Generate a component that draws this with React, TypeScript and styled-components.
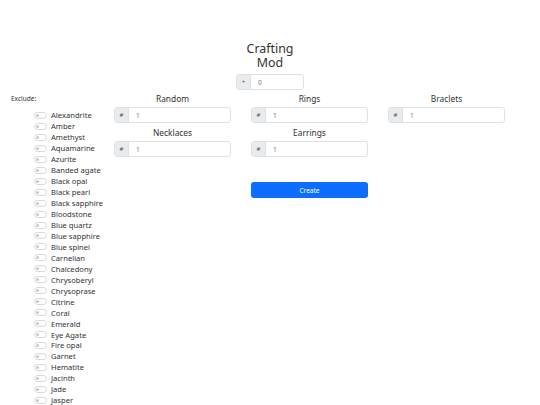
import styled, { createGlobalStyle } from "styled-components"

const GlobalStyle = createGlobalStyle`
  body {
    margin: 0;
    font-family: "Noto Sans", "Open Sans", sans-serif;
    color: #212529;
    background: #fff;
  }
  * { box-sizing: border-box; }
`

const gems = [
  "Alexandrite", "Amber", "Amethyst", "Aquamarine", "Azurite", "Banded agate",
  "Black opal", "Black pearl", "Black sapphire", "Bloodstone", "Blue quartz",
  "Blue sapphire", "Blue spinel", "Carnelian", "Chalcedony", "Chrysoberyl",
  "Chrysoprase", "Citrine", "Coral", "Emerald", "Eye Agate", "Fire opal",
  "Garnet", "Hematite", "Jacinth", "Jade", "Jasper",
]

const Page = styled.div`
  width: 540px;
  height: 405px;
  overflow: hidden;
`

const Header = styled.header`
  padding-top: 42px;
  display: flex;
  flex-direction: column;
  align-items: center;
`

const Title = styled.h1`
  margin: 0;
  width: 60px;
  text-align: center;
  font-size: 12.4px;
  font-weight: 400;
  line-height: 14px;
  color: #333;
`

const Main = styled.div`
  display: grid;
  grid-template-columns: 104px 137px 137px 137px;
  margin-top: -1px;
`

const Sidebar = styled.aside`
  grid-row: 1 / span 4;
  padding-left: 11px;
  padding-top: 3px;
`

const Exclude = styled.div`
  font-size: 6.5px;
  line-height: 10px;
  color: #333;
  margin-bottom: 6px;
`

const SwitchRow = styled.label`
  display: flex;
  align-items: center;
  height: 10.96px;
  padding-left: 23px;
  font-size: 7.6px;
  color: #333;
`

const Toggle = styled.span`
  width: 13px;
  height: 7px;
  border: 1px solid #d5d8dc;
  border-radius: 4px;
  margin-right: 4px;
  position: relative;
  flex-shrink: 0;
  &::after {
    content: "";
    position: absolute;
    left: 1px;
    top: 1px;
    width: 3px;
    height: 3px;
    border-radius: 50%;
    background: #c4c8cc;
  }
`

const Cell = styled.div<{ $col?: number }>`
  padding: 0 10px;
  grid-column: ${p => p.$col ?? "auto"};
  display: flex;
  flex-direction: column;
`

const Label = styled.div`
  text-align: center;
  font-size: 8.4px;
  line-height: 13px;
  color: #333;
  margin: 1px 0 2px;
`

const Group = styled.div<{ $width?: number }>`
  display: flex;
  width: ${p => (p.$width ? `${p.$width}px` : "100%")};
  height: 16px;
  border: 1px solid #dee2e6;
  border-radius: 3px;
  overflow: hidden;
  margin-bottom: 2px;
`

const Prefix = styled.span`
  width: 14px;
  background: #e9ecef;
  border-right: 1px solid #dee2e6;
  display: flex;
  align-items: center;
  justify-content: center;
  font-size: 6px;
  color: #555;
`

const Value = styled.span`
  flex: 1;
  padding-left: 7px;
  display: flex;
  align-items: center;
  font-size: 6.5px;
  color: #7a7a7a;
`

const Button = styled.button`
  margin-top: 23px;
  height: 16px;
  border: none;
  border-radius: 3px;
  background: #0d6efd;
  color: #fff;
  font-family: inherit;
  font-size: 6.5px;
`

const Field = ({ label, prefix = "#", value = "1" }: { label: string; prefix?: string; value?: string }) => (
  <>
    <Label>{label}</Label>
    <Group>
      <Prefix>{prefix}</Prefix>
      <Value>{value}</Value>
    </Group>
  </>
)

export default function App() {
  return (
    <Page>
      <GlobalStyle />
      <Header>
        <Title>Crafting Mod</Title>
        <Group $width={68} style={{ marginTop: 4 }}>
          <Prefix>+</Prefix>
          <Value>0</Value>
        </Group>
      </Header>
      <Main>
        <Sidebar>
          <Exclude>Exclude:</Exclude>
          {gems.map(g => (
            <SwitchRow key={g}>
              <Toggle />
              {g}
            </SwitchRow>
          ))}
        </Sidebar>
        <Cell $col={2}><Field label="Random" /></Cell>
        <Cell $col={3}><Field label="Rings" /></Cell>
        <Cell $col={4}><Field label="Braclets" /></Cell>
        <Cell $col={2}><Field label="Necklaces" /></Cell>
        <Cell $col={3}><Field label="Earrings" /></Cell>
        <Cell $col={3}><Button>Create</Button></Cell>
      </Main>
    </Page>
  )
}
